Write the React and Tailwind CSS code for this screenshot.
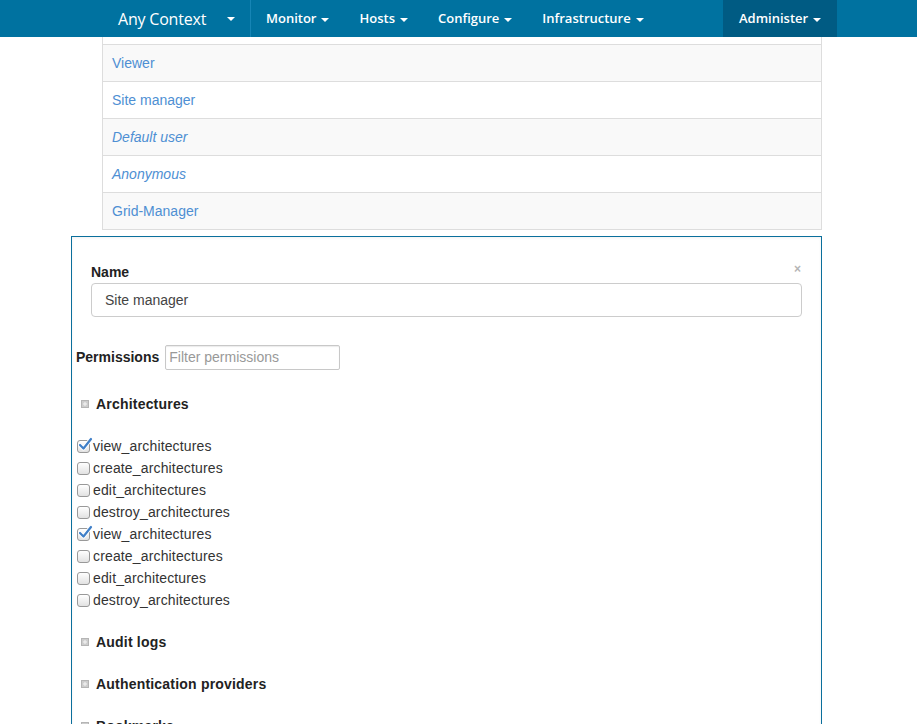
import React from "react";

const Caret = () => (
  <span className="inline-block w-0 h-0 border-l-[4px] border-r-[4px] border-t-[4px] border-l-transparent border-r-transparent border-t-white ml-[5px] translate-y-[1px]" />
);

const NavItem = ({ label }) => (
  <div className="flex items-center px-[15px] h-full text-[13px] font-semibold">
    {label}
    <Caret />
  </div>
);

const roles = [
  { name: "Viewer", italic: false },
  { name: "Site manager", italic: false },
  { name: "Default user", italic: true },
  { name: "Anonymous", italic: true },
  { name: "Grid-Manager", italic: false },
];

const Checkbox = ({ checked }) => (
  <span className="relative inline-block w-[13px] h-[13px] shrink-0">
    <span className="absolute inset-0 rounded-[3px] border border-[#999999] bg-gradient-to-b from-white to-[#e2e2e2]" />
    {checked && (
      <svg
        className="absolute left-[1px] top-[-3px]"
        width="15"
        height="14"
        viewBox="0 0 15 14"
      >
        <path
          d="M2 8 L5.5 11.5 L13 2"
          fill="none"
          stroke="white"
          strokeWidth="4"
          strokeLinecap="round"
          strokeLinejoin="round"
        />
        <path
          d="M2 8 L5.5 11.5 L13 2"
          fill="none"
          stroke="#3f7fc8"
          strokeWidth="2.2"
          strokeLinecap="round"
          strokeLinejoin="round"
        />
      </svg>
    )}
  </span>
);

const ExpandIcon = () => (
  <svg width="8" height="8" viewBox="0 0 8 8" className="shrink-0">
    <rect x="0.5" y="0.5" width="7" height="7" fill="#cdcdcd" stroke="#b5b5b5" />
    <path d="M2 4 H6 M4 2 V6" stroke="#f4f4f4" strokeWidth="1" />
  </svg>
);

const Heading = ({ label, className = "" }) => (
  <div className={"flex items-center h-[20px] " + className}>
    <span className="ml-[9px] mr-[7px] flex items-center">
      <ExpandIcon />
    </span>
    <span className="font-bold text-[14px] tracking-[0.2px] text-[#222]">{label}</span>
  </div>
);

const perms = [
  ["view_architectures", true],
  ["create_architectures", false],
  ["edit_architectures", false],
  ["destroy_architectures", false],
  ["view_architectures", true],
  ["create_architectures", false],
  ["edit_architectures", false],
  ["destroy_architectures", false],
];

export default function App() {
  return (
    <div className="min-h-screen bg-white font-['Liberation_Sans',Arial,sans-serif] text-[14px] text-[#333]">
      {/* Navbar */}
      <div className="h-[37px] bg-[#0072a0] flex text-white font-['Open_Sans',sans-serif]">
        <div className="w-[251px] h-full pl-[118px] pr-[15px] flex items-center justify-between border-r border-[#1685b5]">
          <span className="text-[16px] tracking-[-0.2px]">Any Context</span>
          <span className="inline-block w-0 h-0 border-l-[4px] border-r-[4px] border-t-[4px] border-l-transparent border-r-transparent border-t-white" />
        </div>
        <NavItem label="Monitor" />
        <NavItem label="Hosts" />
        <NavItem label="Configure" />
        <NavItem label="Infrastructure" />
        <div className="flex-1" />
        <div className="w-[114px] mr-[80px] h-full bg-[#005b83] flex items-center pl-[16px] text-[13px] font-semibold">
          Administer
          <Caret />
        </div>
      </div>

      {/* Role list */}
      <div className="ml-[102px] w-[720px] border-l border-r border-[#dddddd]">
        <div className="h-[7px] bg-white" />
        {roles.map((r, i) => (
          <div
            key={r.name}
            className={
              "border-t border-[#dddddd] flex items-center pl-[9px] text-[#4e8fd3] " +
              (i % 2 === 0 ? "bg-[#f9f9f9]" : "bg-white") +
              (r.italic ? " italic" : "") +
              (i === roles.length - 1 ? " border-b h-[38px]" : " h-[37px]")
            }
          >
            {r.name}
          </div>
        ))}
      </div>

      {/* Edit panel */}
      <div className="relative ml-[71px] mt-[6px] w-[751px] border border-[#0b6f9c] pt-[25px] pb-[40px] shadow-[inset_0_1px_3px_rgba(0,0,0,0.06)]">
        <span className="absolute right-[20px] top-[26px] text-[#b5b5b5] text-[12px] font-bold leading-none">
          ×
        </span>
        <div className="px-[19px]">
          <div className="font-bold text-[14px] leading-[20px] text-[#222] mb-[1px]">Name</div>
          <div className="h-[34px] rounded-[4px] border border-[#cccccc] flex items-center pl-[13px] text-[14px] text-[#444]">
            Site manager
          </div>
        </div>

        <div className="flex items-center mt-[28px] pl-[4px]">
          <span className="font-bold text-[14px] text-[#222]">Permissions</span>
          <div className="ml-[6px] w-[175px] h-[25px] border border-[#c8c8c8] rounded-[2px] shadow-[inset_0_1px_1px_rgba(0,0,0,0.08)] flex items-center pl-[3px] text-[14px] text-[#999]">
            Filter permissions
          </div>
        </div>

        <Heading label="Architectures" className="mt-[24px]" />
        <div className="mt-[21px] pl-[5px]">
          {perms.map(([p, c], i) => (
            <div key={i} className="h-[22px] flex items-center">
              <Checkbox checked={c} />
              <span className="ml-[3px] text-[14px] tracking-[0.15px] text-[#333]">{p}</span>
            </div>
          ))}
        </div>
        <Heading label="Audit logs" className="mt-[21px]" />
        <Heading label="Authentication providers" className="mt-[22px]" />
        <Heading label="Bookmarks" className="mt-[22px]" />
        <Heading label="Compute profiles" className="mt-[22px]" />
        <Heading label="Compute resources" className="mt-[22px]" />
      </div>
    </div>
  );
}
